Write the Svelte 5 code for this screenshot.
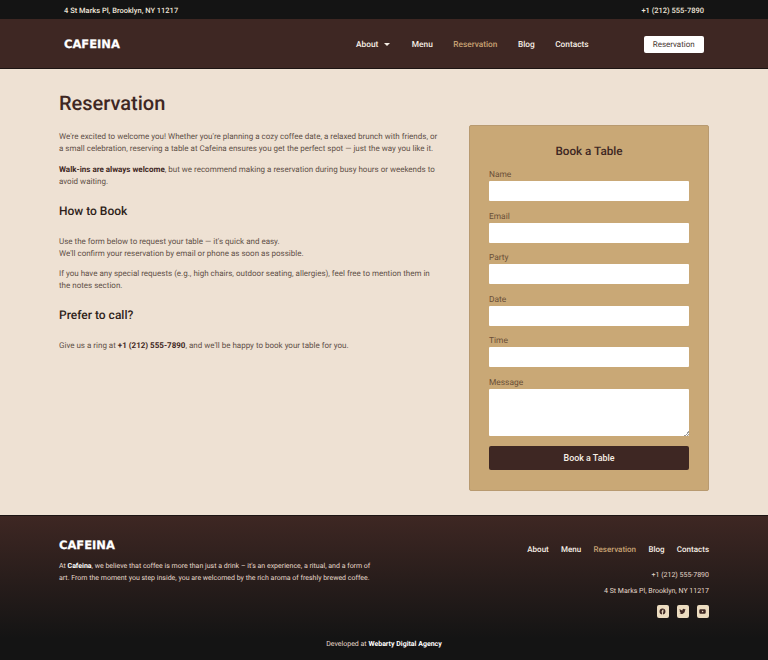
<script>
  const navLinks = [
    { label: 'About', caret: true },
    { label: 'Menu' },
    { label: 'Reservation', active: true },
    { label: 'Blog' },
    { label: 'Contacts' }
  ];
  const fields = ['Name', 'Email', 'Party', 'Date', 'Time'];
</script>

<div class="topbar">
  <span>4 St Marks Pl, Brooklyn, NY 11217</span>
  <span>+1 (212) 555-7890</span>
</div>

<header class="navbar">
  <a class="logo" href="#top">CAFEINA</a>
  <nav class="nav">
    {#each navLinks as link}
      <a href="#top" class:active={link.active}>
        {link.label}
        {#if link.caret}<i class="caret"></i>{/if}
      </a>
    {/each}
  </nav>
  <a class="nav-btn" href="#top">Reservation</a>
</header>

<main class="main">
  <section class="copy">
    <h1>Reservation</h1>
    <p>We're excited to welcome you! Whether you're planning a cozy coffee date, a relaxed brunch with friends, or a small celebration, reserving a table at Cafeina ensures you get the perfect spot — just the way you like it.</p>
    <p><strong>Walk-ins are always welcome</strong>, but we recommend making a reservation during busy hours or weekends to avoid waiting.</p>
    <h2>How to Book</h2>
    <p>Use the form below to request your table — it's quick and easy.<br />We'll confirm your reservation by email or phone as soon as possible.</p>
    <p>If you have any special requests (e.g., high chairs, outdoor seating, allergies), feel free to mention them in the notes section.</p>
    <h2>Prefer to call?</h2>
    <p>Give us a ring at <strong>+1 (212) 555-7890</strong>, and we'll be happy to book your table for you.</p>
  </section>

  <form class="card" on:submit|preventDefault>
    <h3>Book a Table</h3>
    {#each fields as field}
      <label class="field">
        <span>{field}</span>
        <input type="text" />
      </label>
    {/each}
    <label class="field">
      <span>Message</span>
      <textarea></textarea>
    </label>
    <button type="submit">Book a Table</button>
  </form>
</main>

<footer class="footer">
  <div class="footer-top">
    <div class="about">
      <a class="logo" href="#top">CAFEINA</a>
      <p>At <strong>Cafeina</strong>, we believe that coffee is more than just a drink – it's an experience, a ritual, and a form of art. From the moment you step inside, you are welcomed by the rich aroma of freshly brewed coffee.</p>
    </div>
    <div class="footer-right">
      <nav class="footer-nav">
        {#each navLinks as link}
          <a href="#top" class:active={link.active}>{link.label}</a>
        {/each}
      </nav>
      <span class="phone">+1 (212) 555-7890</span>
      <span class="address">4 St Marks Pl, Brooklyn, NY 11217</span>
      <div class="social">
        <a href="#top" aria-label="Facebook">
          <svg viewBox="0 0 24 24" width="7" height="7"><path fill="#3e2723" d="M12 2a10 10 0 0 0-1.600 19.900v-7H7.900V12h2.500V9.800c0-2.500 1.500-3.900 3.800-3.900 1.100 0 2.200.2 2.200.2v2.500h-1.300c-1.200 0-1.600.8-1.600 1.600V12h2.800l-.4 2.900h-2.400v7A10 10 0 0 0 12 2z"/></svg>
        </a>
        <a href="#top" aria-label="Twitter">
          <svg viewBox="0 0 24 24" width="7" height="7"><path fill="#3e2723" d="M23 5a9 9 0 0 1-2.600.7 4.500 4.500 0 0 0 2-2.500 9 9 0 0 1-2.900 1.100 4.500 4.500 0 0 0-7.700 4.100A12.800 12.800 0 0 1 2.500 3.700a4.500 4.500 0 0 0 1.400 6 4.500 4.500 0 0 1-2-.6c0 2.200 1.500 4 3.600 4.500a4.500 4.500 0 0 1-2 .1 4.500 4.500 0 0 0 4.200 3.100A9 9 0 0 1 1 18.700 12.700 12.700 0 0 0 20.700 7.400 9 9 0 0 0 23 5z"/></svg>
        </a>
        <a href="#top" aria-label="YouTube">
          <svg viewBox="0 0 24 24" width="7" height="7"><path fill="#3e2723" fill-rule="evenodd" d="M5 4.500h14a4 4 0 0 1 4 4v7a4 4 0 0 1-4 4H5a4 4 0 0 1-4-4v-7a4 4 0 0 1 4-4zM10 8.500v7l6-3.500z"/></svg>
        </a>
      </div>
    </div>
  </div>
  <div class="credit">Developed at <strong>Webarty Digital Agency</strong></div>
</footer>

<style>
  :global(body) {
    margin: 0;
    background: #eee1d3;
    font-family: Roboto, "Liberation Sans", sans-serif;
    text-rendering: geometricPrecision;
  }

  a {
    color: inherit;
    text-decoration: none;
  }

  .topbar {
    display: flex;
    justify-content: space-between;
    align-items: center;
    box-sizing: border-box;
    height: 19px;
    padding: 1px 64px 0;
    background: #141414;
    color: #f0e6da;
    font-size: 7.5px;
    font-weight: 500;
  }

  .navbar {
    display: flex;
    align-items: center;
    height: 47px;
    padding: 2px 64px 0;
    background: #3e2723;
    border-bottom: 1px solid #1c1413;
    color: #f7efe6;
  }

  .navbar .logo {
    margin-bottom: 1px;
  }

  .logo {
    font-family: "DejaVu Sans", sans-serif;
    font-size: 11.5px;
    font-weight: 700;
    -webkit-text-stroke: 0.25px #fff;
    color: #fff;
  }

  .nav {
    display: flex;
    align-items: center;
    gap: 20.5px;
    margin-left: auto;
    font-size: 8.3px;
    font-weight: 500;
  }

  .nav a {
    display: flex;
    align-items: center;
  }

  .active {
    color: #c8a273;
  }

  .caret {
    width: 0;
    height: 0;
    margin: 0 1px 0 6px;
    border: 3px solid transparent;
    border-top: 3px solid #f7efe6;
    border-bottom: 0;
  }

  .nav-btn {
    display: flex;
    align-items: center;
    justify-content: center;
    width: 60.5px;
    height: 17.5px;
    margin-left: 55px;
    border-radius: 2px;
    background: #fff;
    color: #4a3a34;
    font-size: 8px;
  }

  .main {
    display: grid;
    grid-template-columns: 380px 240px;
    justify-content: space-between;
    align-items: start;
    height: 446px;
    box-sizing: border-box;
    padding: 21px 59px 0;
    color: #5f5047;
  }

  h1 {
    margin: 0 0 15px;
    color: #3e2723;
    font-size: 20px;
    font-weight: 500;
    line-height: 26px;
  }

  .copy p {
    margin: 0 0 8.5px;
    font-size: 8px;
    line-height: 12px;
  }

  .copy strong {
    color: #3e2723;
    font-weight: 700;
  }

  h2 {
    margin: 15px 0 17px;
    color: #2e1f1a;
    font-size: 12px;
    font-weight: 500;
    line-height: 16px;
  }

  .card {
    display: flex;
    flex-direction: column;
    box-sizing: border-box;
    height: 366px;
    margin-top: 35px;
    padding: 17px 19px 0;
    border: 1px solid #b89a70;
    border-radius: 2px;
    background: #c9a876;
  }

  h3 {
    margin: 0 0 11px;
    color: #3e2723;
    font-size: 11.7px;
    font-weight: 500;
    line-height: 16px;
    text-align: center;
  }

  .field {
    display: flex;
    flex-direction: column;
    margin-bottom: 10.5px;
    color: #6a4f38;
    font-size: 8.4px;
  }

  .field span {
    margin-bottom: 1px;
    line-height: 10px;
  }

  .field input,
  .field textarea {
    box-sizing: border-box;
    width: 100%;
    margin: 0;
    border: 0;
    border-radius: 1px;
    background: #fff;
    outline: none;
  }

  .field input {
    height: 20px;
  }

  .field textarea {
    display: block;
    height: 47px;
    padding: 0;
    font-size: 8px;
  }

  .field textarea::-webkit-resizer {
    background: linear-gradient(135deg, transparent 50%, #9a9a9a 50%, #9a9a9a 62%, transparent 62%, transparent 76%, #9a9a9a 76%, #9a9a9a 88%, transparent 88%) no-repeat right bottom / 5px 5px;
  }

  .card button {
    height: 24px;
    border: 0;
    border-radius: 2px;
    background: #3e2723;
    color: #f7efe6;
    font-family: inherit;
    font-size: 8.9px;
    font-weight: 500;
    cursor: pointer;
  }

  .footer {
    display: flex;
    flex-direction: column;
    box-sizing: border-box;
    height: 145px;
    padding: 22px 59px 0;
    border-top: 1px solid #1c1413;
    background: linear-gradient(#3e2723, #141414 85%);
    color: #e6d9cb;
    font-size: 7px;
  }

  .footer-top {
    display: flex;
    justify-content: space-between;
  }

  .about {
    width: 320px;
  }

  .about p {
    margin: 8px 0 0;
    line-height: 12px;
  }

  .about strong {
    color: #fff;
    font-weight: 700;
  }

  .footer-right {
    display: flex;
    flex-direction: column;
    align-items: flex-end;
  }

  .footer-nav {
    display: flex;
    gap: 12.3px;
    margin: 6px 0 15px;
    color: #f7efe6;
    font-size: 8px;
    font-weight: 500;
    line-height: 11px;
  }

  .phone,
  .address {
    line-height: 11px;
  }

  .phone {
    margin-bottom: 5px;
  }

  .address {
    margin-bottom: 8px;
  }

  .social {
    display: flex;
    gap: 7.5px;
  }

  .social a {
    display: flex;
    align-items: center;
    justify-content: center;
    width: 12.5px;
    height: 12.5px;
    border-radius: 2px;
    background: #ecdcc0;
  }

  .credit {
    margin-top: 21px;
    text-align: center;
    font-size: 7px;
    line-height: 11px;
  }

  .credit strong {
    color: #fff;
    font-weight: 700;
  }
</style>
